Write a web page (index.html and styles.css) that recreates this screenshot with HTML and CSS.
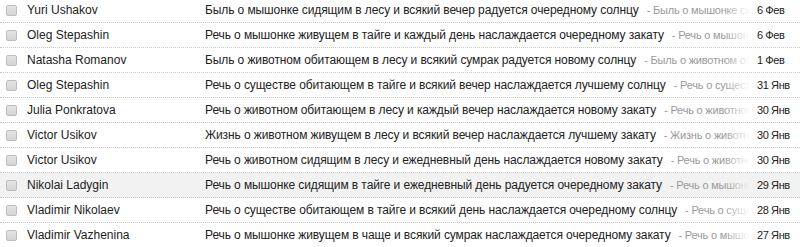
FILE: index.html
```html
<!DOCTYPE html>
<html lang="ru">
<head>
<meta charset="utf-8">
<title>Inbox</title>
<link rel="stylesheet" href="styles.css">
</head>
<body>
<div class="list">
  <div class="row"><span class="check"><span class="box"></span></span><span class="from">Yuri Ushakov</span><span class="content"><span class="subject">Быль о мышонке сидящим в лесу и всякий вечер радуется очередному солнцу</span><span class="snippet">- Быль о мышонке сид</span></span><span class="date">6 Фев</span></div>
  <div class="row"><span class="check"><span class="box"></span></span><span class="from">Oleg Stepashin</span><span class="content"><span class="subject">Речь о мышонке живущем в тайге и каждый день наслаждается очередному закату</span><span class="snippet">- Речь о мышонке</span></span><span class="date">6 Фев</span></div>
  <div class="row"><span class="check"><span class="box"></span></span><span class="from">Natasha Romanov</span><span class="content"><span class="subject">Быль о животном обитающем в лесу и всякий сумрак радуется новому солнцу</span><span class="snippet">- Быль о животном оби</span></span><span class="date">1 Фев</span></div>
  <div class="row"><span class="check"><span class="box"></span></span><span class="from">Oleg Stepashin</span><span class="content"><span class="subject">Речь о существе обитающем в тайге и всякий вечер наслаждается лучшему солнцу</span><span class="snippet">- Речь о сущест</span></span><span class="date">31 Янв</span></div>
  <div class="row"><span class="check"><span class="box"></span></span><span class="from">Julia Ponkratova</span><span class="content"><span class="subject">Речь о животном обитающем в лесу и каждый вечер наслаждается новому закату</span><span class="snippet">- Речь о животном</span></span><span class="date">30 Янв</span></div>
  <div class="row"><span class="check"><span class="box"></span></span><span class="from">Victor Usikov</span><span class="content"><span class="subject">Жизнь о животном живущем в лесу и всякий вечер наслаждается лучшему закату</span><span class="snippet">- Жизнь о животно</span></span><span class="date">30 Янв</span></div>
  <div class="row"><span class="check"><span class="box"></span></span><span class="from">Victor Usikov</span><span class="content"><span class="subject">Речь о животном сидящим в лесу и ежедневный день наслаждается новому закату</span><span class="snippet">- Речь о животном</span></span><span class="date">30 Янв</span></div>
  <div class="row hover"><span class="check"><span class="box"></span></span><span class="from">Nikolai Ladygin</span><span class="content"><span class="subject">Речь о мышонке сидящим в тайге и ежедневный день радуется очередному закату</span><span class="snippet">- Речь о мышонке</span></span><span class="date">29 Янв</span></div>
  <div class="row"><span class="check"><span class="box"></span></span><span class="from">Vladimir Nikolaev</span><span class="content"><span class="subject">Речь о существе обитающем в тайге и всякий день наслаждается очередному солнцу</span><span class="snippet">- Речь о сущес</span></span><span class="date">28 Янв</span></div>
  <div class="row"><span class="check"><span class="box"></span></span><span class="from">Vladimir Vazhenina</span><span class="content"><span class="subject">Речь о мышонке живущем в чаще и всякий сумрак наслаждается очередному закату</span><span class="snippet">- Речь о мышон</span></span><span class="date">27 Янв</span></div>
</div>
</body>
</html>
```

FILE: styles.css
```css
html, body {
  margin: 0;
  padding: 0;
  background: #ffffff;
}

body {
  font-family: "Liberation Sans", Arial, sans-serif;
  font-size: 12px;
  color: #222222;
  overflow: hidden;
}

.list {
  margin-top: -2px;
}

.row {
  display: flex;
  align-items: center;
  height: 24px;
  line-height: 24px;
  border-bottom: 1px dotted #c8c8c8;
  white-space: nowrap;
  background: #ffffff;
  --row-bg: #ffffff;
}

.row.hover {
  background: #f2f2f2;
  --row-bg: #f2f2f2;
}

.check {
  flex: none;
  width: 27px;
  display: flex;
  align-items: center;
  padding-left: 6px;
  box-sizing: border-box;
}

.box {
  display: block;
  width: 9px;
  height: 9px;
  border: 1px solid #bdbdbd;
  border-radius: 2px;
  background: linear-gradient(#e4e4e4, #d4d4d4);
}

.from {
  flex: none;
  width: 178px;
  overflow: hidden;
  color: #222222;
}

.content {
  flex: 1 1 auto;
  min-width: 0;
  display: flex;
  overflow: hidden;
  position: relative;
}

.content::after {
  content: "";
  position: absolute;
  top: 0;
  right: 0;
  width: 26px;
  height: 100%;
  background: linear-gradient(to right, rgba(255, 255, 255, 0), var(--row-bg));
}

.subject {
  flex: none;
  color: #222222;
  font-size: 12px;
  letter-spacing: -0.1px;
}

.snippet {
  flex: 1 1 auto;
  min-width: 0;
  overflow: hidden;
  color: #999999;
  font-size: 11px;
  padding-left: 8px;
  letter-spacing: -0.2px;
}

.date {
  flex: none;
  width: 50px;
  padding-left: 7px;
  box-sizing: border-box;
  font-size: 11px;
  letter-spacing: -0.4px;
  color: #222222;
  overflow: hidden;
}
```
